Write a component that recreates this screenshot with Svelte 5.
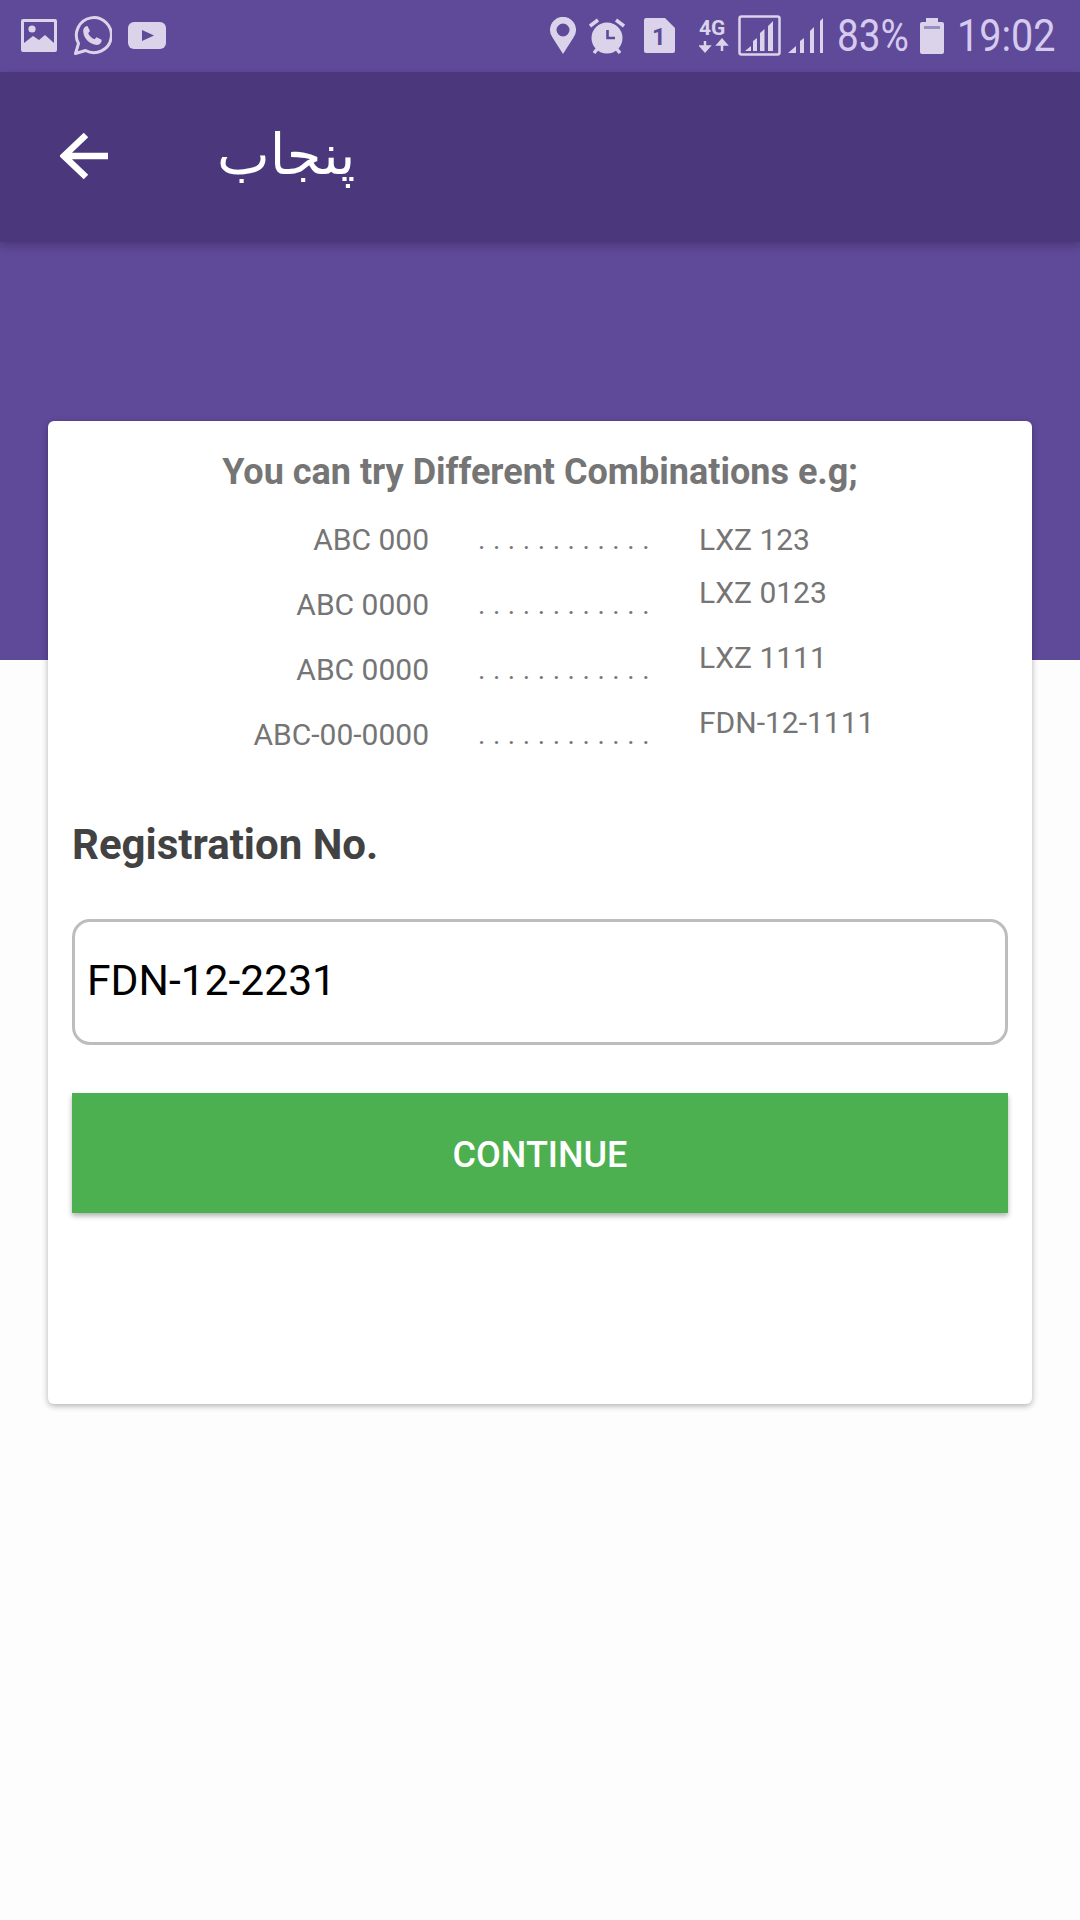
<script lang="ts">
  // Example plates: left and right columns of the hint table.
  const EXAMPLES = [
    { left: 'ABC 000', right: 'LXZ 123' },
    { left: 'ABC 0000', right: 'LXZ 0123' },
    { left: 'ABC 0000', right: 'LXZ 1111' },
    { left: 'ABC-00-0000', right: 'FDN-12-1111' },
  ];
</script>

<div class="page">
  <div class="statusbar">
    <div class="status-group">
      <svg class="ic-picture" width="36" height="33" viewBox="0 0 36 33">
        <rect width="36" height="33" rx="2" fill="#dad3ea" />
        <path d="M3 3H33V24L24 16 18 21 12 17 3 24Z" fill="#5f4999" />
        <circle cx="11" cy="10" r="3.6" fill="#dad3ea" />
      </svg>
      <svg class="ic-whatsapp" width="39" height="39" viewBox="0 0 39 39">
        <path d="M2.5 37.5 5.500 27.500A17.500 17.500 0 1 1 12.500 34.500Z" fill="none" stroke="#dad3ea" stroke-width="3" stroke-linejoin="round" />
        <path d="M14.500 10 17 15 15.200 17.200C16.400 20 18.600 22 21.400 23.200L23.600 21.300 28.600 23.700C28.800 26.300 27 28.700 24 28.900 16.500 28.500 10.400 22.100 10.200 15.300 10.200 12.500 11.500 10.200 14.500 10Z" fill="#dad3ea" />
      </svg>
      <svg class="ic-youtube" width="38" height="27" viewBox="0 0 38 27">
        <rect width="38" height="27" rx="6" fill="#dad3ea" />
        <path d="M14 8 26 13.500 14 19Z" fill="#5f4999" />
      </svg>
    </div>

    <div class="status-group">
      <svg class="ic-pin" width="26" height="37" viewBox="0 0 26 37">
        <path fill-rule="evenodd" d="M13 37 2.500 20.500A13 13 0 1 1 23.500 20.500ZM13 6.500A6.500 6.500 0 1 0 13 19.500 6.500 6.500 0 1 0 13 6.500Z" fill="#dad3ea" />
      </svg>
      <svg class="ic-alarm" width="36" height="36" viewBox="0 0 36 36">
        <circle cx="18" cy="20" r="15.500" fill="#dad3ea" />
        <path d="M1 8 9 2M35 8 27 2M5 35 9 30M31 35 27 30" stroke="#dad3ea" stroke-width="3.500" fill="none" />
        <path d="M18.500 12V20H26" stroke="#5f4999" stroke-width="2.600" fill="none" />
      </svg>
      <svg class="ic-sim" width="31" height="35" viewBox="0 0 31 35">
        <path d="M2 0H21L31 10V33A2 2 0 0 1 29 35H2A2 2 0 0 1 0 33V2A2 2 0 0 1 2 0Z" fill="#dad3ea" />
        <text x="15" y="27" text-anchor="middle" class="sim-num">1</text>
      </svg>
      <svg class="ic-net" width="30" height="34" viewBox="0 0 30 34">
        <text x="0" y="16" class="net-label">4G</text>
        <path d="M6 22V28M2 27.500 6 32 10 27.500Z" fill="#dad3ea" stroke="#dad3ea" stroke-width="2.500" />
        <path d="M23 32V26M19 25.500 23 21 27 25.500Z" fill="#dad3ea" stroke="#dad3ea" stroke-width="2.500" />
      </svg>
      <svg class="ic-sig-box" width="43" height="41" viewBox="0 0 43 41">
        <rect x="1.500" y="1.500" width="40" height="38" rx="2" fill="none" stroke="#dad3ea" stroke-width="2.500" />
        <path d="M7 36 13 31V36ZM15 36V26L19 23V36ZM22 36V18L26.500 14V36ZM30 36V11L35 6V36Z" fill="#dad3ea" />
      </svg>
      <svg class="ic-sig" width="35" height="35" viewBox="0 0 35 35">
        <path d="M0 35 8 28V35ZM12 35V23L16 20V35ZM22 35V13L26 9V35ZM32 35V3L35 0V35Z" fill="#dad3ea" />
      </svg>
      <span class="stat pct">83%</span>
      <svg class="ic-batt" width="24" height="36" viewBox="0 0 24 36">
        <path d="M6 0H18V4H22A2 2 0 0 1 24 6V34A2 2 0 0 1 22 36H2A2 2 0 0 1 0 34V6A2 2 0 0 1 2 4H6Z" fill="#dad3ea" />
        <rect x="4" y="8" width="16" height="3" fill="#9a8ec2" />
      </svg>
      <span class="stat clock">19:02</span>
    </div>
  </div>

  <header class="toolbar">
    <svg class="back" width="48" height="48" viewBox="0 0 48 48">
      <path d="M48 24H5M26 3 4 24 26 45" fill="none" stroke="#fff" stroke-width="6.500" />
    </svg>
    <h1 class="title">پنجاب</h1>
  </header>

  <main class="content">
    <section class="card">
      <h2 class="hint-title">You can try Different Combinations e.g;</h2>

      <div class="examples">
        {#each EXAMPLES as row, i}
          <div class="example-row">
            <span class="ex-left">{row.left}</span>
            <span class="ex-dots">. . . . . . . . . . . .</span>
            <span class="ex-right" class:raised={i > 0}>{row.right}</span>
          </div>
        {/each}
      </div>

      <label class="reg-label" for="reg-no">Registration No.</label>
      <input id="reg-no" class="reg-input" type="text" value="FDN-12-2231" />
      <button class="continue" type="button">CONTINUE</button>
    </section>
  </main>
</div>

<style>
  :global(body) {
    background: #fdfdfd;
  }

  .page {
    width: 1080px;
    height: 1920px;
    overflow: hidden;
    font-family: Roboto, sans-serif;
    display: flex;
    flex-direction: column;
  }

  .statusbar {
    height: 72px;
    flex: none;
    box-sizing: border-box;
    padding: 0 0 1px 21px;
    background: #5f4999;
    display: flex;
    align-items: center;
    justify-content: space-between;
  }

  .status-group {
    display: flex;
    align-items: center;
  }

  .ic-whatsapp,
  .ic-youtube {
    margin-left: 16px;
  }

  .ic-alarm {
    margin-left: 13px;
  }

  .ic-sim {
    margin-left: 19px;
  }

  .ic-net {
    margin-left: 24px;
  }

  .ic-sig-box {
    margin-left: 9px;
  }

  .ic-sig {
    margin-left: 7px;
  }

  .ic-batt {
    margin-left: 11px;
  }

  .sim-num {
    font: 700 24px Roboto, sans-serif;
    fill: #5f4999;
  }

  .net-label {
    font: 700 21px Roboto, sans-serif;
    fill: #dad3ea;
  }

  .stat {
    display: block;
    font-size: 45px;
    line-height: 50px;
    color: #d6cbee;
    white-space: nowrap;
    transform-origin: left center;
  }

  .pct {
    width: 72px;
    margin-left: 14px;
    transform: scaleX(0.86);
  }

  .clock {
    width: 98px;
    margin-left: 13px;
    margin-right: 25px;
    transform: scaleX(0.88);
  }

  .toolbar {
    height: 170px;
    flex: none;
    position: relative;
    z-index: 1;
    background: #4b387c;
    box-shadow: 0 4px 8px rgba(0, 0, 0, 0.22);
    display: flex;
    align-items: center;
    padding-left: 60px;
  }

  .back {
    flex: none;
    margin-bottom: 2px;
  }

  .title {
    margin: 0 0 5px 109px;
    font: 400 56px "DejaVu Sans", sans-serif;
    color: #fff;
  }

  .content {
    flex: 1;
    padding: 179px 48px 0;
    background: linear-gradient(#5f4999 418px, #fdfdfd 418px);
  }

  .card {
    box-sizing: border-box;
    height: 983px;
    padding: 30px 24px 0;
    background: #fff;
    border-radius: 6px;
    box-shadow: 0 2px 6px rgba(0, 0, 0, 0.3);
  }

  .hint-title {
    margin: 0;
    font-size: 36px;
    line-height: 42px;
    font-weight: 700;
    color: #757575;
    text-align: center;
  }

  .examples {
    margin-top: 14px;
  }

  .example-row {
    display: grid;
    grid-template-columns: 357px 172px auto;
    column-gap: 49px;
    height: 65px;
    line-height: 65px;
    font-size: 30px;
    color: #757575;
  }

  .ex-left {
    text-align: right;
  }

  .ex-dots {
    white-space: nowrap;
    font-size: 28px;
    letter-spacing: 0.3px;
  }

  .ex-right.raised {
    margin-top: -12px;
  }

  .reg-label {
    display: block;
    margin-top: 53px;
    font-size: 42px;
    line-height: 50px;
    font-weight: 700;
    color: #424242;
  }

  .reg-input {
    display: block;
    box-sizing: border-box;
    width: 936px;
    height: 126px;
    margin-top: 49px;
    padding: 0 12px 5px;
    border: 3px solid #bdbdbd;
    border-radius: 18px;
    background: #fff;
    outline: none;
    font: 400 42.6px Roboto, sans-serif;
    color: #000;
  }

  .continue {
    display: block;
    width: 936px;
    height: 120px;
    margin-top: 48px;
    padding-top: 4px;
    border: 0;
    background: #4caf50;
    box-shadow: 0 3px 5px rgba(0, 0, 0, 0.3);
    font: 500 36px Roboto, sans-serif;
    color: #fff;
  }
</style>
